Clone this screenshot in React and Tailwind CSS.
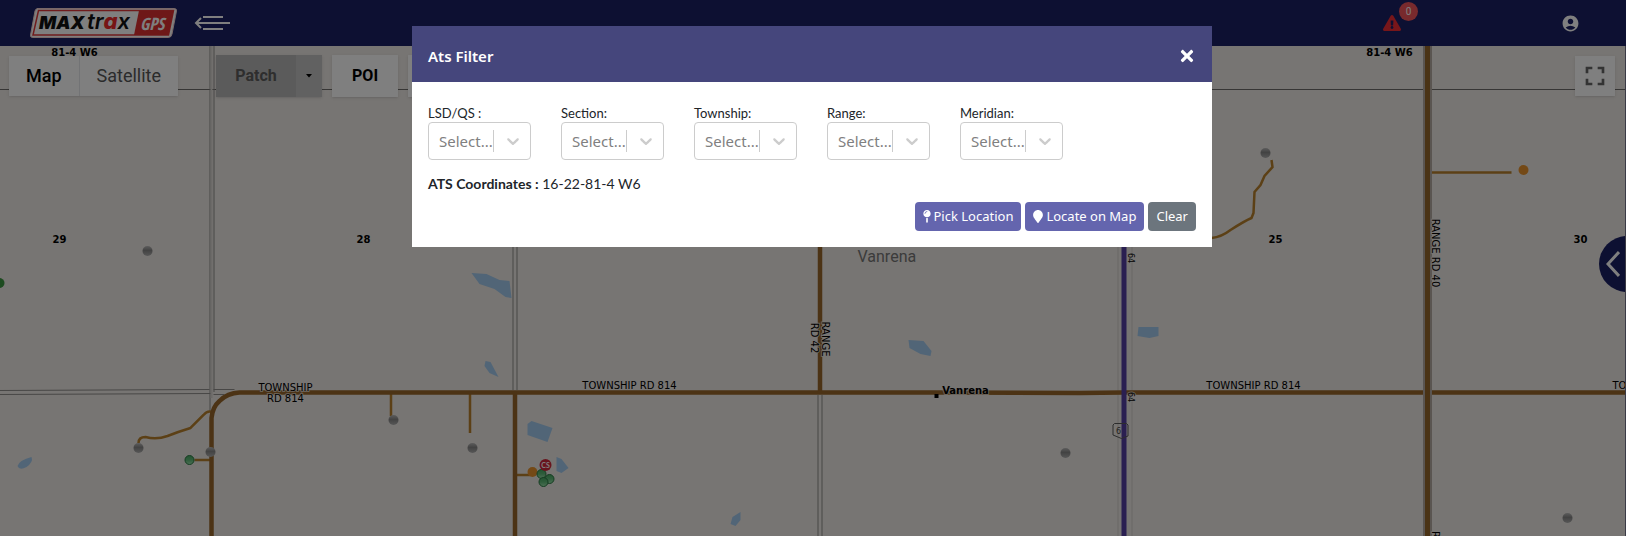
import React, { useState } from 'react';
import { FaMapPin, FaMapMarker, FaTimes, FaExclamationTriangle } from 'react-icons/fa';
import { MdAccountCircle, MdFullscreen } from 'react-icons/md';

const fields = [
  { name: 'lsd', label: 'LSD/QS :' },
  { name: 'section', label: 'Section:' },
  { name: 'township', label: 'Township:' },
  { name: 'range', label: 'Range:' },
  { name: 'meridian', label: 'Meridian:' },
];

const wells = [
  [148, 251], [394, 420], [473, 448], [139, 448], [211, 452], [1266, 153], [1066, 453], [1568, 518],
];

const greenWells = [
  [190, 460], [542, 474], [550, 479], [544, 482],
];

const sections = [
  { x: 60, y: 243, text: '29' },
  { x: 364, y: 243, text: '28' },
  { x: 1276, y: 243, text: '25' },
  { x: 1581, y: 243, text: '30' },
  { x: 75, y: 56, text: '81-4 W6' },
  { x: 1390, y: 56, text: '81-4 W6' },
];

const Logo = () => (
  <svg viewBox="0 0 150 32" className="h-8 w-[150px]" role="img" aria-label="MAXtrax GPS">
    <path d="M9 1.500 H146 Q149 1.500 148.500 4 L144 27 Q143.500 30.500 140 30.500 H5 Q2 30.500 2.500 28 L7 4 Q7.500 1.500 10 1.500 Z" fill="#ffffff" stroke="#f0d0d0" />
    <path d="M10.500 3.500 H145.500 L140.500 28 H5 Z" fill="#ffffff" stroke="#e0393a" strokeWidth="1.500" />
    <path d="M111 3.500 H145.500 L140.500 28 H106 Z" fill="#dd3031" />
    <text x="11" y="22" fill="#111111" fontFamily="Inter, sans-serif" fontWeight="900" fontStyle="italic" fontSize="18">MAX</text>
    <text x="59" y="22" fill="#111111" fontFamily="Inter, sans-serif" fontWeight="600" fontStyle="italic" fontSize="22">
      tr<tspan fill="#ee2b2b" fontWeight="800">a</tspan>x
    </text>
    <text x="112" y="23" fill="#ffffff" fontFamily="'Liberation Sans Narrow', 'Open Sans Condensed', 'Liberation Sans', sans-serif" fontWeight="700" fontStyle="italic" fontSize="17">GPS</text>
  </svg>
);

const MapCanvas = () => (
  <svg viewBox="0 46 1626 490" preserveAspectRatio="xMidYMid slice" className="absolute inset-0 h-full w-full" aria-hidden="true">
    <defs>
      <linearGradient id="well" x1="0" y1="0" x2="0" y2="1">
        <stop offset="0" stopColor="#b8b8b8" />
        <stop offset="0.45" stopColor="#868686" />
        <stop offset="0.6" stopColor="#929292" />
        <stop offset="1" stopColor="#aeaeae" />
      </linearGradient>
      <linearGradient id="gas" x1="0" y1="0" x2="0" y2="1">
        <stop offset="0" stopColor="#47a862" />
        <stop offset="0.5" stopColor="#5fba78" />
        <stop offset="1" stopColor="#9be2ac" />
      </linearGradient>
    </defs>
    <rect x="0" y="0" width="1626" height="600" fill="#eeeae6" />

    {/* lakes */}
    <g fill="#a2caee">
      <path d="M472 273 L487 274 L500 280 L510 281 L512 298 L506 297 L495 289 L480 284 Z" />
      <path d="M486 361 L491 362 L499 377 L490 373 L485 366 Z" />
      <path d="M528 424 L532 421 L553 428 L548 442 L528 435 Z" />
      <path d="M557 457 L562 459 L569 468 L562 473 L557 471 Z" />
      <path d="M733 517 L741 512 L741 520 L736 526 L731 524 Z" />
      <path d="M909 340 L924 341 L932 351 L931 356 L921 354 L910 348 Z" />
      <path d="M1139 327 H1159 V336 L1150 338 L1138 336 Z" />
      <path d="M18 466 Q20 460 32 457 Q34 462 27 467 Q20 471 18 466 Z" />
    </g>

    {/* section roads */}
    <g fill="none" stroke="#908e8c">
      <path d="M0 89.500 H1626" strokeWidth="1" stroke="#6e6c6a" />
      <path d="M210.500 46 V411 M214.500 46 V392" />
      <path d="M0 390.500 L210 389.500 M0 394.500 L212 393.500 M214 394.500 H225 M214 389.500 H235" />
      <path d="M513.500 46 V390 M517.500 46 V390 M818.500 395 V536 M822.500 395 V536" />
      <path d="M1118.500 46 V536 M1132.500 46 V536" stroke="#d2ceca" />
    </g>
    <path d="M212 46 V398" stroke="#d8d4d0" strokeWidth="2" />

    {/* lease roads */}
    <g fill="none" stroke="#b8812c" strokeWidth="2.500">
      <path d="M139 443 Q139 437 146 437 Q157 440 168 436 Q178 432 191 428 L204 415 Q208 410 213 412" />
      <path d="M195 460 H211" />
      <path d="M391.500 394 V416 M470.500 394 V433" />
      <path d="M517 475 H531" />
      <path d="M1432 172.500 H1512" />
      <path d="M1212 238 Q1222 237 1231 230 Q1245 221 1252 218 L1254 213 L1255 192 L1261 185 L1265 176 L1273 167 L1272 160" />
    </g>

    {/* main roads */}
    <g fill="none" stroke="#98672a" strokeWidth="4.500">
      <path d="M212 536 V418 Q213 407 220 401 Q228 393 240 392.500 H935 L1080 393 L1124 392.500 H1626" />
      <path d="M515.500 393 V536 M820.500 46 V393" />
    </g>
    <path d="M1428 46 V536" stroke="#b5aaa2" strokeWidth="9" />
    <path d="M1428 46 V536" stroke="#94672a" strokeWidth="5" />
    <path d="M1124.500 46 V536" stroke="#553ea2" strokeWidth="5" />

    {/* wells */}
    {wells.map(([x, y]) => <circle key={`${x}-${y}`} cx={x} cy={y} r="5" fill="url(#well)" />)}
    <circle cx="0" cy="283" r="5" fill="#3a9640" />
    <circle cx="1524" cy="170" r="5" fill="#e8932c" />
    <circle cx="533" cy="472" r="5" fill="#e8932c" />
    {greenWells.map(([x, y]) => <circle key={`${x}-${y}`} cx={x} cy={y} r="4.500" fill="url(#gas)" stroke="#2b7a44" />)}
    <circle cx="546" cy="465" r="6" fill="#d0283a" />
    <text x="546" y="468" textAnchor="middle" fill="#ffffff" fontFamily="Lato, sans-serif" fontWeight="700" fontSize="7">CS</text>

    {/* highway shield */}
    <path d="M1115 423.500 H1127 L1128.500 425 V436 L1122 438.500 L1113.500 435 V425 Z" fill="none" stroke="#5a5a5a" />
    <text x="1119" y="434" textAnchor="middle" fill="#444444" fontFamily="'DejaVu Sans', sans-serif" fontSize="8">6</text>

    <g fill="#000000" fontFamily="'DejaVu Sans', sans-serif" fontSize="10" textAnchor="middle" stroke="#eeeae6" strokeWidth="2" strokeOpacity="0.700" paintOrder="stroke">
      <text x="286" y="391">TOWNSHIP</text>
      <text x="286" y="402">RD 814</text>
      <text x="630" y="389">TOWNSHIP RD 814</text>
      <text x="1254" y="389">TOWNSHIP RD 814</text>
      <text x="1613" y="389" textAnchor="start">TOWNSHIP RD 814</text>
      <text transform="translate(822 339) rotate(90)">RANGE</text>
      <text transform="translate(811 338) rotate(90)">RD 42</text>
      <text transform="translate(1432 253) rotate(90)">RANGE RD 40</text>
      <text transform="translate(1432 531) rotate(90)" textAnchor="start">RANGE RD 40</text>
      <text transform="translate(1128 258) rotate(90)" fontSize="8">64</text>
      <text transform="translate(1128 397) rotate(90)" fontSize="8">64</text>
    </g>
    <g fill="#000000" fontFamily="'DejaVu Sans', sans-serif" fontWeight="700" fontSize="10" textAnchor="middle">
      {sections.map((s) => <text key={`${s.x}-${s.y}`} x={s.x} y={s.y}>{s.text}</text>)}
      <text x="966" y="394" stroke="#eeeae6" strokeWidth="2" strokeOpacity="0.700" paintOrder="stroke">Vanrena</text>
    </g>
    <rect x="935" y="394" width="4" height="4" fill="#000000" />
    <text x="858" y="262" fill="#777777" fontFamily="Roboto, sans-serif" fontSize="16">Vanrena</text>
  </svg>
);

const Header = () => (
  <header className="flex h-[46px] items-center bg-[#1b2064] pl-7 pr-[46px]">
    <Logo />
    <button type="button" aria-label="Toggle menu" className="ml-4">
      <svg viewBox="0 0 36 16" className="h-4 w-9" fill="none" stroke="#ffffff" strokeWidth="2">
        <path d="M9 2 H29 M2 8 H36 M9 14 H29" />
        <path d="M7 3 L2 8 L7 13" />
      </svg>
    </button>
    <div className="ml-auto flex items-center">
      <button type="button" aria-label="Alerts" className="relative mr-40">
        <FaExclamationTriangle className="size-[18px] text-[#ee2c34]" />
        <span className="absolute -top-3 left-4 flex size-[19px] items-center justify-center rounded-full bg-[#f0555a] font-[Roboto,sans-serif] text-[10px] text-white">0</span>
      </button>
      <button type="button" aria-label="Account">
        <MdAccountCircle className="size-[19px] text-white" />
      </button>
    </div>
  </header>
);

const MapControls = () => (
  <div className="absolute inset-x-0 top-[9px] flex items-start pl-[9px] pr-[10px] font-[Roboto,sans-serif]">
    <div className="mt-px flex h-10 bg-white text-lg shadow">
      <button type="button" className="border-r border-gray-200 px-[17px] font-medium text-black">Map</button>
      <button type="button" className="px-[17px] text-[#565656]">Satellite</button>
    </div>
    <div className="ml-[38px] flex h-[42px] bg-[#c2c2c2] text-[#5c5c5c] shadow">
      <button type="button" className="w-20 bg-[#b6b6b6] font-bold">Patch</button>
      <button type="button" aria-label="Patch options" className="flex w-[26px] items-center justify-center">
        <svg viewBox="0 0 6 4" className="h-1 w-1.5" fill="#000000"><path d="M0 0 H6 L3 3.500 Z" /></svg>
      </button>
    </div>
    <button type="button" className="ml-2.5 h-[42px] w-[66px] bg-white font-bold text-black shadow">POI</button>
    <div className="ml-2.5 h-[42px] w-20 bg-white shadow" />
    <button type="button" aria-label="Fullscreen" className="ml-auto mt-px flex size-10 items-center justify-center bg-white shadow">
      <MdFullscreen className="size-8 text-[#666666]" />
    </button>
  </div>
);

const SelectField = ({ name, label, value, onChange }) => (
  <div>
    <label htmlFor={name} className="block font-[Lato,sans-serif] text-[13px] leading-[18px] text-[#212529]">{label}</label>
    <div className="relative">
      <select
        id={name}
        name={name}
        value={value}
        onChange={onChange}
        className="h-[38px] w-[103px] appearance-none rounded border border-[#cccccc] bg-white pl-2.5 text-[15px] text-[#808080]"
      >
        <option value="">Select...</option>
      </select>
      <span className="pointer-events-none absolute inset-y-2 right-0 flex w-[38px] items-center justify-center border-l border-[#cccccc]">
        <svg viewBox="0 0 20 20" className="size-5" fill="#cccccc">
          <path d="M4.516 7.548c0.436-0.446 1.043-0.481 1.576 0l3.908 3.747 3.908-3.747c0.533-0.481 1.141-0.446 1.574 0 0.436 0.445 0.408 1.197 0 1.615-0.406 0.418-4.695 4.502-4.695 4.502-0.217 0.223-0.502 0.335-0.787 0.335s-0.570-0.112-0.789-0.335c0 0-4.287-4.084-4.695-4.502s-0.436-1.170 0-1.615z" />
        </svg>
      </span>
    </div>
  </div>
);

const AtsFilter = () => {
  const [formData, setFormData] = useState({
    lsd: '',
    section: '',
    township: '',
    range: '',
    meridian: '',
  });

  const handleChange = (e) => {
    setFormData({ ...formData, [e.target.name]: e.target.value });
  };

  return (
    <div role="dialog" aria-modal="true" aria-labelledby="ats-title" className="mx-auto w-full max-w-[800px] bg-white font-['Noto_Sans',sans-serif]">
      <div className="flex h-14 items-center justify-between bg-[#45467c] px-4 pt-1 text-white">
        <h2 id="ats-title" className="text-[15px] font-semibold">Ats Filter</h2>
        <button type="button" aria-label="Close"><FaTimes className="size-[18px]" /></button>
      </div>
      <form className="px-4 pb-4 pt-[22px]" onSubmit={(e) => e.preventDefault()}>
        <div className="flex flex-wrap gap-x-[30px] gap-y-2">
          {fields.map((f) => (
            <SelectField key={f.name} {...f} value={formData[f.name]} onChange={handleChange} />
          ))}
        </div>
        <p className="mt-3.5 font-[Lato,sans-serif] text-sm text-[#212529]">
          <strong>ATS Coordinates :</strong> 16-22-81-4 W6
        </p>
        <div className="mt-2 flex justify-end gap-1 text-[13px] text-white">
          <button type="button" className="flex h-[29px] items-center gap-[3px] rounded bg-[#6465ae] px-2">
            <FaMapPin className="w-2" />Pick Location
          </button>
          <button type="button" className="flex h-[29px] items-center gap-[3px] rounded bg-[#6465ae] px-2">
            <FaMapMarker className="w-2.5" />Locate on Map
          </button>
          <button type="button" className="h-[29px] rounded bg-[#6c757d] px-2">Clear</button>
        </div>
      </form>
    </div>
  );
};

const App = () => {
  return (
    <div className="relative flex min-h-screen flex-col overflow-hidden">
      <Header />
      <main className="relative flex-1 overflow-hidden border-r border-[#77778c]">
        <MapCanvas />
        <MapControls />
        <button type="button" aria-label="Open panel" className="absolute -right-[30px] top-[190px] flex size-14 items-center rounded-full bg-[#1b2064] pl-[7px]">
          <svg viewBox="0 0 14 26" className="h-[26px] w-3.5" fill="none" stroke="#ffffff" strokeWidth="3">
            <path d="M13 1 L2 13 L13 25" />
          </svg>
        </button>
      </main>
      <div className="absolute inset-0 bg-black/50 pr-0.5 pt-[26px]">
        <AtsFilter />
      </div>
    </div>
  );
};

export default App;
